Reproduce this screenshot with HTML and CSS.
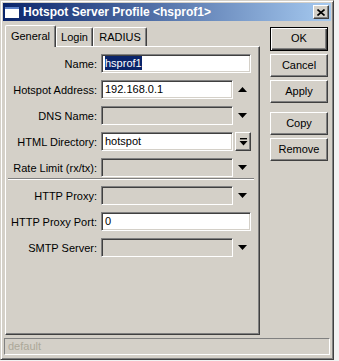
FILE: index.html
```html
<!DOCTYPE html>
<html lang="en">
<head>
    <meta charset="UTF-8" />
    <title>Hotspot Server Profile</title>
    <link rel="stylesheet" href="styles.css">
</head>
<body>
    <div class="window">
        <div class="titlebar">
            <span class="app-icon"></span>
            <span class="title">Hotspot Server Profile &lt;hsprof1&gt;</span>
            <span class="close-btn">
                <svg width="8" height="7" viewBox="0 0 8 7"><path d="M0.5 0.5 L7.5 6.5 M7.5 0.5 L0.5 6.5" stroke="#000" stroke-width="1.6" fill="none"/></svg>
            </span>
        </div>

        <div class="content">
            <div class="main">
                <div class="tabs">
                    <div class="tab active">General</div>
                    <div class="tab">Login</div>
                    <div class="tab">RADIUS</div>
                </div>

                <div class="panel">
                    <div class="row">
                        <label>Name:</label>
                        <div class="field wide"><span class="selected">hsprof1</span></div>
                    </div>
                    <div class="row">
                        <label>Hotspot Address:</label>
                        <div class="field">192.168.0.1</div>
                        <span class="arrow"><svg width="9" height="5" viewBox="0 0 9 5"><polygon points="0,5 4.5,0 9,5" fill="#000"/></svg></span>
                    </div>
                    <div class="row">
                        <label>DNS Name:</label>
                        <div class="field disabled"></div>
                        <span class="arrow"><svg width="9" height="5" viewBox="0 0 9 5"><polygon points="0,0 9,0 4.5,5" fill="#000"/></svg></span>
                    </div>
                    <div class="row">
                        <label>HTML Directory:</label>
                        <div class="field">hotspot</div>
                        <span class="drop-btn"><svg width="9" height="8" viewBox="0 0 9 8"><rect x="1" y="0" width="7" height="1.4" fill="#000"/><polygon points="0.5,3 8.5,3 4.5,7.5" fill="#000"/></svg></span>
                    </div>
                    <div class="row">
                        <label>Rate Limit (rx/tx):</label>
                        <div class="field disabled"></div>
                        <span class="arrow"><svg width="9" height="5" viewBox="0 0 9 5"><polygon points="0,0 9,0 4.5,5" fill="#000"/></svg></span>
                    </div>

                    <div class="separator"></div>

                    <div class="row">
                        <label>HTTP Proxy:</label>
                        <div class="field disabled"></div>
                        <span class="arrow"><svg width="9" height="5" viewBox="0 0 9 5"><polygon points="0,0 9,0 4.5,5" fill="#000"/></svg></span>
                    </div>
                    <div class="row">
                        <label>HTTP Proxy Port:</label>
                        <div class="field wide">0</div>
                    </div>
                    <div class="row">
                        <label>SMTP Server:</label>
                        <div class="field disabled"></div>
                        <span class="arrow"><svg width="9" height="5" viewBox="0 0 9 5"><polygon points="0,0 9,0 4.5,5" fill="#000"/></svg></span>
                    </div>
                </div>
            </div>

            <div class="actions">
                <div class="btn default">OK</div>
                <div class="btn">Cancel</div>
                <div class="btn">Apply</div>
                <div class="btn spaced">Copy</div>
                <div class="btn">Remove</div>
            </div>
        </div>

        <div class="statusbar">default</div>
    </div>
</body>
</html>
```

FILE: styles.css
```css
body {
    margin: 0;
    background-color: #f2f2f2;
    font-family: "Liberation Sans", Arial, sans-serif;
    font-size: 11px;
    color: #000;
}
.window {
    box-sizing: border-box;
    width: 334px;
    height: 360px;
    background-color: #d4d0c8;
    border: 1px solid;
    border-color: #d4d0c8 #404040 #404040 #d4d0c8;
    box-shadow: inset 1px 1px #fff, inset -1px -1px #808080;
    padding: 2px;
    display: flex;
    flex-direction: column;
}
.titlebar {
    height: 18px;
    display: flex;
    align-items: center;
    background: linear-gradient(to right, #0a246a, #a6caf0);
    color: #fff;
}
.app-icon {
    width: 14px;
    height: 9px;
    margin: 0 4px 0 2px;
    background-color: #fff;
    border-top: 2px solid #5b7fc8;
}
.title {
    font-weight: bold;
    font-size: 12px;
    flex: 1;
}
.close-btn {
    box-sizing: border-box;
    width: 16px;
    height: 14px;
    margin-right: 2px;
    display: flex;
    align-items: center;
    justify-content: center;
    background-color: #d4d0c8;
    border: 1px solid;
    border-color: #fff #404040 #404040 #fff;
    box-shadow: inset -1px -1px #808080;
}
.content {
    flex: 1;
    display: flex;
    padding: 4px 2px 0 2px;
}
.main {
    width: 255px;
    display: flex;
    flex-direction: column;
}
.tabs {
    display: flex;
    align-items: flex-end;
    height: 21px;
}
.tab {
    box-sizing: border-box;
    height: 19px;
    line-height: 18px;
    text-align: center;
    border: 1px solid;
    border-bottom: none;
    border-color: #fff #404040 #404040 #fff;
    box-shadow: inset -1px 0 #808080;
    border-radius: 2px 2px 0 0;
}
.tab:nth-child(1) { width: 51px; }
.tab:nth-child(2) { width: 37px; }
.tab:nth-child(3) { width: 54px; }
.tab.active {
    height: 22px;
    line-height: 20px;
    margin-bottom: -1px;
    position: relative;
    z-index: 1;
    background-color: #d4d0c8;
}
.panel {
    flex: 1;
    box-sizing: border-box;
    border: 1px solid;
    border-color: #fff #404040 #404040 #fff;
    box-shadow: inset -1px -1px #808080;
    padding-top: 7px;
}
.row {
    display: flex;
    align-items: center;
    height: 19px;
    margin-bottom: 7px;
}
.row label {
    width: 91px;
    text-align: right;
    margin-right: 4px;
}
.field {
    box-sizing: border-box;
    width: 132px;
    height: 19px;
    line-height: 17px;
    padding-left: 3px;
    background-color: #fff;
    border: 1px solid;
    border-color: #808080 #fff #fff #808080;
    box-shadow: inset 1px 1px #404040, inset -1px -1px #d4d0c8;
    white-space: nowrap;
}
.field.wide {
    width: 150px;
}
.field.disabled {
    background-color: #d4d0c8;
}
.selected {
    background-color: #0a246a;
    color: #fff;
    padding: 1px 0;
}
.arrow {
    display: flex;
    margin-left: 5px;
}
.drop-btn {
    box-sizing: border-box;
    width: 16px;
    height: 19px;
    margin-left: 2px;
    display: flex;
    align-items: center;
    justify-content: center;
    border: 1px solid;
    border-color: #fff #404040 #404040 #fff;
    box-shadow: inset -1px -1px #808080;
}
.separator {
    height: 0;
    margin: -6px 5px 6px 2px;
    border-top: 1px solid #808080;
    border-bottom: 1px solid #fff;
}
.actions {
    display: flex;
    flex-direction: column;
    width: 58px;
    margin-left: 10px;
    padding-top: 2px;
}
.btn {
    box-sizing: border-box;
    height: 23px;
    line-height: 21px;
    text-align: center;
    margin-bottom: 3px;
    border: 1px solid;
    border-color: #fff #404040 #404040 #fff;
    box-shadow: inset -1px -1px #808080;
}
.btn.default {
    height: 24px;
    border: 1px solid #000;
    box-shadow: inset 1px 1px #fff, inset -1px -1px #404040, inset -2px -2px #808080;
}
.btn.spaced {
    margin-top: 6px;
}
.statusbar {
    box-sizing: border-box;
    height: 17px;
    margin: 3px 1px 2px 1px;
    padding-left: 3px;
    line-height: 15px;
    color: #aca899;
    border: 1px solid;
    border-color: #808080 #fff #fff #808080;
}
```
